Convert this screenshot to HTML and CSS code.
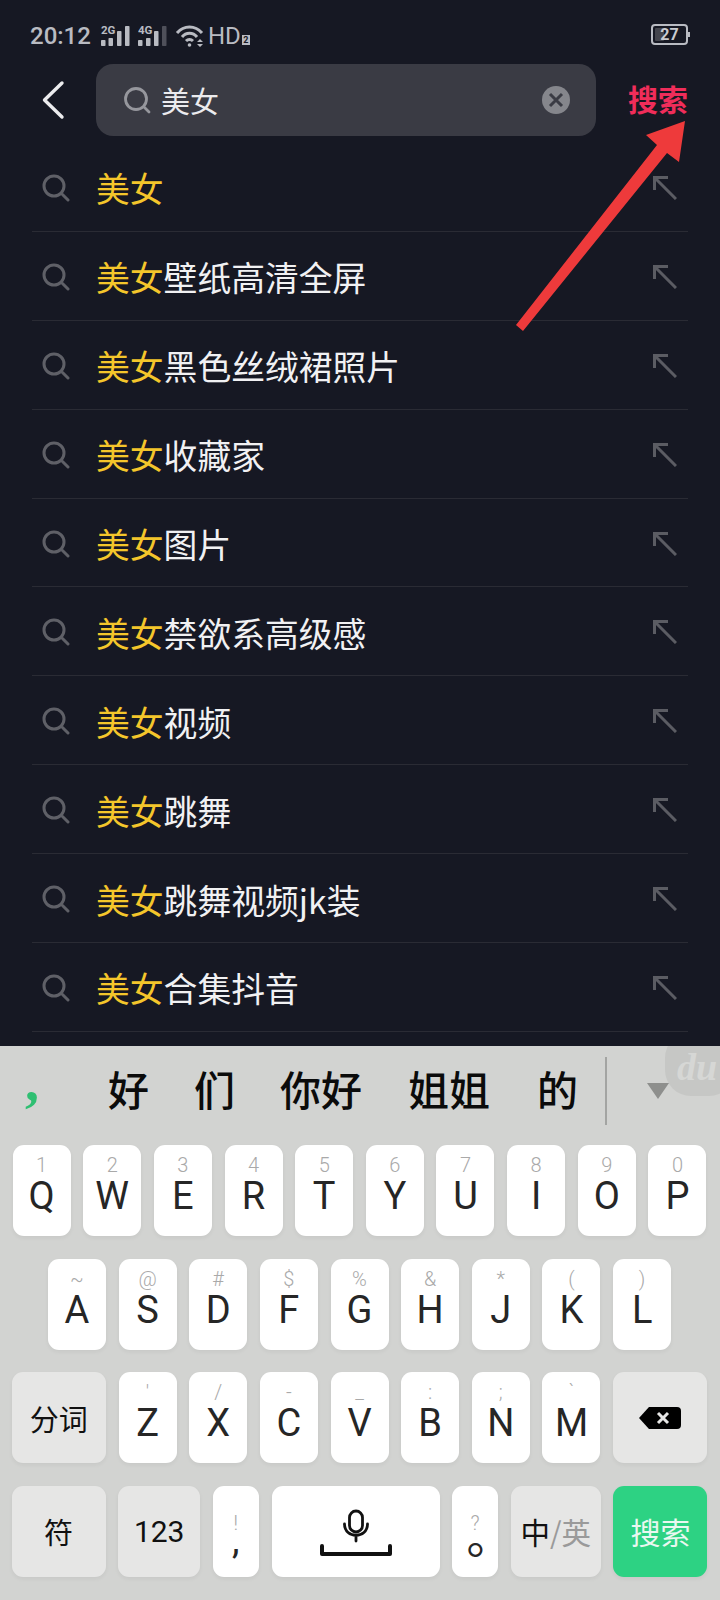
FILE: index.html
```html
<!DOCTYPE html>
<html lang="zh-CN">
<head>
  <meta charset="UTF-8" />
  <meta name="viewport" content="width=device-width, initial-scale=1.0"/>
  <title>搜索</title>
  <link rel="stylesheet" href="styles.css">
</head>
<body>
  <div class="phone">
    <div class="status">
      <span class="time">20:12</span>
      <svg class="sig" width="32" height="24" viewBox="0 0 32 24">
        <text x="1" y="9.500" class="net">2G</text>
        <rect x="1" y="16" width="4.500" height="6" rx=".8"/><rect x="8.500" y="14" width="4.500" height="8" rx=".8"/><rect x="17" y="7" width="4.500" height="15" rx=".8"/><rect x="25" y="2" width="4.500" height="20" rx=".8"/>
      </svg>
      <svg class="sig sig2" width="32" height="24" viewBox="0 0 32 24">
        <text x="0" y="9.500" class="net">4G</text>
        <rect x="0" y="16" width="4.500" height="6" rx=".8"/><rect x="8" y="14" width="4.500" height="8" rx=".8"/><rect x="16" y="7" width="4.500" height="15" rx=".8"/><rect x="24" y="2" width="4.500" height="20" rx=".8" fill-opacity=".35"/>
      </svg>
      <svg class="wifi" width="30" height="24" viewBox="0 0 30 24" fill="none" stroke="#b9bbc2" stroke-width="3">
        <path d="M2 9C9 1 20 1 27 9"/><path d="M7 13C11 8 18 8 22 13"/><path d="M11 17C13 15 16 15 18 17"/>
        <circle cx="14.500" cy="21" r="1.800" fill="#b9bbc2" stroke="none"/>
        <path d="M22 18l3-3 3 3zM22 20l3 3 3-3z" fill="#b9bbc2" stroke="none"/>
      </svg>
      <span class="hd">HD</span><span class="hd-sim">2</span>
      <span class="battery"><span class="battery-fill"></span><span class="battery-num">27</span></span>
    </div>

    <div class="search-head">
      <svg class="back" width="24" height="40" viewBox="0 0 24 40" fill="none" stroke="#ececee" stroke-width="3.400" stroke-linecap="round" stroke-linejoin="round">
        <path d="M21 3L3.500 20 21 37"/>
      </svg>
      <div class="search-box">
        <svg width="28" height="28" viewBox="0 0 28 28" fill="none" stroke="#96979d" stroke-width="2.800" stroke-linecap="round">
          <circle cx="13" cy="13" r="10.500"/><path d="M21.500 21.500L26 26"/>
        </svg>
        <span class="query">美女</span>
        <span class="clear">
          <svg width="16" height="16" viewBox="0 0 16 16" fill="none" stroke="#3a3b44" stroke-width="3">
            <path d="M2 2l12 12M14 2L2 14"/>
          </svg>
        </span>
      </div>
      <span class="go">搜索</span>
    </div>

    <ul class="list" id="list"></ul>

    <div class="keyboard">
      <div class="cands">
        <span class="comma">,</span>
        <span class="cand c1">好</span>
        <span class="cand c2">们</span>
        <span class="cand c3">你好</span>
        <span class="cand c4">姐姐</span>
        <span class="cand c5">的</span>
        <span class="cand-line"></span>
        <span class="tri"></span>
        <span class="du">du</span>
      </div>
      <div class="rows">
        <div class="row">
          <div class="key"><i>1</i><b>Q</b></div>
          <div class="key"><i>2</i><b>W</b></div>
          <div class="key"><i>3</i><b>E</b></div>
          <div class="key"><i>4</i><b>R</b></div>
          <div class="key"><i>5</i><b>T</b></div>
          <div class="key"><i>6</i><b>Y</b></div>
          <div class="key"><i>7</i><b>U</b></div>
          <div class="key"><i>8</i><b>I</b></div>
          <div class="key"><i>9</i><b>O</b></div>
          <div class="key"><i>0</i><b>P</b></div>
        </div>
        <div class="row">
          <div class="key"><i>~</i><b>A</b></div>
          <div class="key"><i>@</i><b>S</b></div>
          <div class="key"><i>#</i><b>D</b></div>
          <div class="key"><i>$</i><b>F</b></div>
          <div class="key"><i>%</i><b>G</b></div>
          <div class="key"><i>&amp;</i><b>H</b></div>
          <div class="key"><i>*</i><b>J</b></div>
          <div class="key"><i>(</i><b>K</b></div>
          <div class="key"><i>)</i><b>L</b></div>
        </div>
        <div class="row">
          <div class="key fn wide">分词</div>
          <div class="key"><i>'</i><b>Z</b></div>
          <div class="key"><i>/</i><b>X</b></div>
          <div class="key"><i>-</i><b>C</b></div>
          <div class="key"><i>_</i><b>V</b></div>
          <div class="key"><i>:</i><b>B</b></div>
          <div class="key"><i>;</i><b>N</b></div>
          <div class="key"><i>`</i><b>M</b></div>
          <div class="key fn wide">
            <svg width="42" height="22" viewBox="0 0 42 22">
              <path d="M10 0H38a4 4 0 0 1 4 4V18a4 4 0 0 1-4 4H10L0 11z" fill="#000"/>
              <path d="M19 6l10 10M29 6L19 16" stroke="#e6e6e5" stroke-width="3" fill="none"/>
            </svg>
          </div>
        </div>
        <div class="row">
          <div class="key fn wide">符</div>
          <div class="key fn num">123</div>
          <div class="key punct"><i>!</i><b>,</b></div>
          <div class="key space">
            <svg width="72" height="50" viewBox="0 0 72 50" fill="none" stroke="#111" stroke-linecap="round">
              <rect x="29.500" y="2" width="13" height="21" rx="6.500" stroke-width="2.800"/>
              <path d="M24.500 15c0 15 23 15 23 0M36 27v5" stroke-width="2.800"/>
              <path d="M2 37v8h68v-8" stroke-width="4" stroke-linecap="round" stroke-linejoin="round"/>
            </svg>
          </div>
          <div class="key punct"><i>?</i><b class="stop">。</b></div>
          <div class="key fn lang">中<em>/英</em></div>
          <div class="key wide send">搜索</div>
        </div>
      </div>
    </div>

    <svg class="arrow" width="720" height="340" viewBox="0 0 720 340">
      <path d="M685 121L646 135 657 145 516 325 523 331 667 153 679 162z" fill="#ee3a3b"/>
    </svg>
  </div>

  <script>
    const items = ['', '壁纸高清全屏', '黑色丝绒裙照片', '收藏家', '图片', '禁欲系高级感', '视频', '跳舞', '跳舞视频jk装', '合集抖音'];
    const list = document.getElementById('list');
    items.forEach(function (rest) {
      const li = document.createElement('li');
      li.className = 'item';
      li.innerHTML =
        '<svg class="item-search" width="28" height="28" viewBox="0 0 28 28" fill="none" stroke="#5f6067" stroke-width="3" stroke-linecap="round">' +
        '<circle cx="12" cy="12" r="10"/><path d="M20.500 20.500L26 26"/></svg>' +
        '<span class="item-text"><span class="hl">美女</span>' + rest + '</span>' +
        '<svg class="item-arrow" width="24" height="24" viewBox="0 0 24 24" fill="none" stroke="#5b5c63" stroke-width="3">' +
        '<path d="M1.500 14V1.500H15M2 2l21 21"/></svg>';
      list.appendChild(li);
    });
  </script>
</body>
</html>
```

FILE: styles.css
```css
html, body {
  margin: 0;
  padding: 0;
  background-color: #161823;
}

.phone {
  position: relative;
  width: 720px;
  height: 1600px;
  display: flex;
  flex-direction: column;
  overflow: hidden;
  background-color: #161823;
  font-family: "Noto Sans CJK SC", Roboto, sans-serif;
}

/* status bar */
.status {
  height: 64px;
  flex: none;
  display: flex;
  align-items: center;
  padding: 8px 32px 0 30px;
  box-sizing: border-box;
  color: #b9bbc2;
  font-family: Roboto, sans-serif;
}

.time {
  font-size: 24px;
  font-weight: 500;
  width: 70px;
}

.sig {
  fill: #b9bbc2;
}

.sig2 {
  margin-left: 6px;
}

.net {
  font-size: 11.5px;
  font-weight: 700;
  font-family: Roboto, sans-serif;
}

.wifi {
  margin-left: 5px;
}

.hd {
  font-size: 24px;
  margin-left: 3px;
}

.hd-sim {
  width: 8px;
  height: 10px;
  margin: 8px 0 0 1px;
  background: #b9bbc2;
  color: #161823;
  font-size: 9px;
  font-weight: 700;
  line-height: 10px;
  text-align: center;
}

.battery {
  margin-left: auto;
  position: relative;
  width: 37px;
  height: 21px;
  box-sizing: border-box;
  border: 2px solid #b9bbc2;
  border-radius: 4px;
  display: flex;
  align-items: center;
  justify-content: center;
  margin-bottom: 4px;
}

.battery::after {
  content: "";
  position: absolute;
  right: -4px;
  top: 6px;
  width: 2px;
  height: 5px;
  background: #b9bbc2;
}

.battery-fill {
  position: absolute;
  left: 2px;
  top: 2px;
  bottom: 2px;
  width: 9px;
  background: #44454d;
  border-radius: 1px;
}

.battery-num {
  position: relative;
  font-size: 16px;
  font-weight: 700;
  color: #c9cad0;
}

/* search header */
.search-head {
  height: 78px;
  flex: none;
  display: flex;
  align-items: flex-start;
  box-sizing: border-box;
}

.back {
  margin: 16px 0 0 41px;
}

.search-box {
  margin-left: 31px;
  width: 500px;
  height: 72px;
  box-sizing: border-box;
  padding: 0 26px 0 27px;
  border-radius: 17px;
  background: #3a3b44;
  display: flex;
  align-items: center;
}

.query {
  margin-left: 10px;
  font-size: 29px;
  color: #ebebee;
}

.clear {
  margin-left: auto;
  width: 28px;
  height: 28px;
  border-radius: 50%;
  background: #85868c;
  display: flex;
  align-items: center;
  justify-content: center;
}

.go {
  margin: 12px 0 0 32px;
  font-size: 30px;
  line-height: 44px;
  font-weight: 700;
  color: #f02d5a;
  white-space: nowrap;
}

/* suggestions */
.list {
  list-style: none;
  margin: 0;
  padding: 1px 32px 0;
  flex: 1;
  min-height: 0;
}

.item {
  height: 88.9px;
  box-sizing: border-box;
  padding-top: 2px;
  display: flex;
  align-items: center;
  border-bottom: 1px solid #2a2b34;
}

.item-search {
  margin-left: 10px;
  flex: none;
}

.item-text {
  margin-left: 26px;
  font-size: 33.8px;
  color: #f1f1f3;
  white-space: nowrap;
}

.hl {
  color: #f4c62b;
}

.item-arrow {
  margin-left: auto;
  margin-right: 11px;
  flex: none;
}

/* keyboard */
.keyboard {
  height: 554px;
  flex: none;
  background: #d2d3d1;
  display: flex;
  flex-direction: column;
}

.cands {
  position: relative;
  height: 99px;
  flex: none;
  color: #0b0b0b;
  font-size: 41px;
  font-weight: 500;
  overflow: hidden;
}

.cand {
  position: absolute;
  top: 16px;
  line-height: 52px;
}

.c1 { left: 108px; }
.c2 { left: 194px; }
.c3 { left: 280px; }
.c4 { left: 408px; }
.c5 { left: 537px; }

.comma {
  position: absolute;
  left: 25px;
  top: 9px;
  font-size: 56px;
  line-height: 52px;
  font-weight: 700;
  color: #2fbf72;
  font-family: "Liberation Serif", serif;
}

.cand-line {
  position: absolute;
  left: 605px;
  top: 11px;
  width: 2px;
  height: 68px;
  background: #a3a4a2;
}

.du {
  position: absolute;
  left: 665px;
  top: -14px;
  width: 70px;
  height: 64px;
  border-radius: 26px;
  background: #c6c7c5;
  color: #d6d7d5;
  font-family: "Liberation Serif", serif;
  font-style: italic;
  font-weight: 700;
  font-size: 38px;
  line-height: 70px;
  padding-left: 12px;
  box-sizing: border-box;
}

.tri {
  position: absolute;
  left: 647px;
  top: 37px;
  z-index: 1;
  width: 0;
  height: 0;
  border-left: 11px solid transparent;
  border-right: 11px solid transparent;
  border-top: 16px solid #8e8f8d;
}

.rows {
  display: flex;
  flex-direction: column;
  gap: 22.67px;
  padding: 0 13px 0 12px;
}

.row {
  display: flex;
  justify-content: center;
  gap: 12.67px;
}

.key {
  width: 58px;
  height: 91px;
  flex: none;
  box-sizing: border-box;
  padding-top: 10px;
  border-radius: 11px;
  background: #fff;
  box-shadow: 0 2px 4px rgba(0, 0, 0, 0.05);
  display: flex;
  flex-direction: column;
  align-items: center;
  color: #262626;
  font-family: Roboto, sans-serif;
}

.key i {
  font-style: normal;
  font-size: 20px;
  font-weight: 300;
  line-height: 20px;
  color: #a9a9a9;
}

.key b {
  font-size: 38px;
  font-weight: 400;
  line-height: 40px;
  margin-top: 1px;
}

.fn {
  background: #e6e6e5;
  color: #111;
  font-family: "Noto Sans CJK SC", sans-serif;
  font-size: 29px;
  padding-top: 0;
  justify-content: center;
}

.wide {
  width: 94px;
}

.num {
  width: 82px;
  font-family: Roboto, sans-serif;
  font-size: 30px;
}

.punct {
  width: 46px;
  padding-top: 27px;
}

.punct b {
  font-size: 38px;
  font-weight: 400;
  margin-top: -8px;
  line-height: 30px;
}

.punct .stop {
  font-family: "Noto Sans CJK TC", sans-serif;
  font-size: 46px;
  font-weight: 400;
  margin-top: -1px;
  width: 46px;
  text-align: center;
}

.space {
  width: 168px;
  padding-top: 23px;
}

.lang {
  width: 90px;
  flex-direction: row;
  font-size: 29.5px;
}

.lang em {
  font-style: normal;
  color: #9a9a9a;
}

.send {
  background: #2dd283;
  color: #e9f8f0;
  font-family: "Noto Sans CJK SC", sans-serif;
  font-size: 30px;
  padding-top: 0;
  justify-content: center;
}

/* annotation drawn over the screenshot */
.arrow {
  position: absolute;
  left: 0;
  top: 0;
}
```
